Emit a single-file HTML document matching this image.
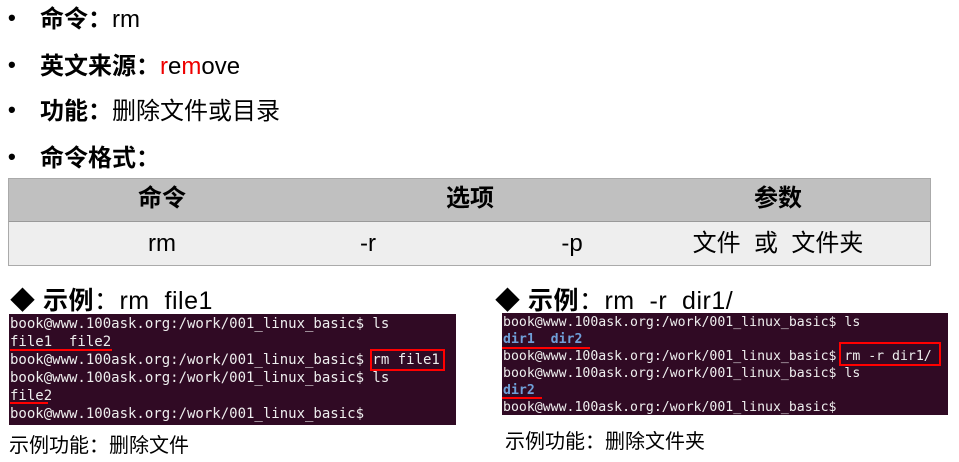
<!DOCTYPE html>
<html><head><meta charset="utf-8"><style>
body{margin:0;width:959px;height:462px;background:#fff;position:relative;overflow:hidden;font-family:"Liberation Sans","Noto Sans CJK SC",sans-serif;color:#000}
.b{position:absolute;left:8px;font-size:24px;line-height:30px;white-space:nowrap}
.b b{font-weight:bold}
.dot{display:inline-block;width:32px;font-size:22px;font-weight:bold;vertical-align:2px}
.t{position:absolute;font-size:24px;line-height:30px;white-space:nowrap;transform:translateX(-50%)}
.term{position:absolute;background:#300a24;color:#eee;font-family:"DejaVu Sans Mono","Liberation Mono",monospace;font-size:14px;line-height:18px;padding:1px 0 0 1px;white-space:pre}
.term .d{color:#6f9fd8;font-weight:bold}
.box{position:absolute;border:2px solid #f00}
.ul{position:absolute;height:2px;background:#f00}
.h2{position:absolute;font-size:25px;white-space:nowrap;letter-spacing:0.5px}
.cap{position:absolute;font-size:20px;white-space:nowrap}
</style></head><body>
<div class="b" style="top:3px"><span class="dot">•</span><b>命令：</b>rm</div>
<div class="b" style="top:50px"><span class="dot">•</span><b>英文来源：</b><span style="color:#e00">r</span>e<span style="color:#e00">m</span>ove</div>
<div class="b" style="top:95px"><span class="dot">•</span><b>功能：</b>删除文件或目录</div>
<div class="b" style="top:142px"><span class="dot">•</span><b>命令格式：</b></div>
<div style="position:absolute;left:8px;top:178px;width:921px;height:42px;background:#c0c0c0;border:1px solid #aaa;border-bottom:2px solid #999"></div>
<div style="position:absolute;left:8px;top:222px;width:921px;height:43px;background:#eee;border:1px solid #aaa;border-top:none"></div>
<div class="t" style="left:162px;top:184px;font-weight:bold">命令</div>
<div class="t" style="left:470px;top:184px;font-weight:bold">选项</div>
<div class="t" style="left:778px;top:184px;font-weight:bold">参数</div>
<div class="t" style="left:162px;top:229px">rm</div>
<div class="t" style="left:368px;top:229px">-r</div>
<div class="t" style="left:572px;top:229px">-p</div>
<div class="t" style="left:778px;top:229px">文件&nbsp; 或&nbsp; 文件夹</div>
<div class="h2" style="left:10px;top:281px">◆ <b>示例</b>：rm&nbsp; file1</div>
<div class="term" style="left:9px;top:314px;width:446px;height:110px">book@www.100ask.org:/work/001_linux_basic$ ls
file1  file2
book@www.100ask.org:/work/001_linux_basic$ rm file1
book@www.100ask.org:/work/001_linux_basic$ ls
file2
book@www.100ask.org:/work/001_linux_basic$</div>
<div class="ul" style="left:10px;top:349px;width:102px"></div>
<div class="ul" style="left:10px;top:402px;width:38px"></div>
<div class="box" style="left:370px;top:349px;width:71px;height:18px"></div>
<div class="cap" style="left:9px;top:429px">示例功能：删除文件</div>
<div class="h2" style="left:495px;top:281px">◆ <b>示例</b>：rm&nbsp; -r&nbsp; dir1/</div>
<div class="term" style="left:502px;top:313px;width:445px;height:101px;line-height:17px;font-size:13.2px">book@www.100ask.org:/work/001_linux_basic$ ls
<span class="d">dir1  dir2</span>
book@www.100ask.org:/work/001_linux_basic$ rm -r dir1/
book@www.100ask.org:/work/001_linux_basic$ ls
<span class="d">dir2</span>
book@www.100ask.org:/work/001_linux_basic$</div>
<div class="ul" style="left:502px;top:347px;width:88px"></div>
<div class="ul" style="left:502px;top:397px;width:40px"></div>
<div class="box" style="left:839px;top:342px;width:98px;height:20px"></div>
<div class="cap" style="left:505px;top:425px">示例功能：删除文件夹</div>
</body></html>
